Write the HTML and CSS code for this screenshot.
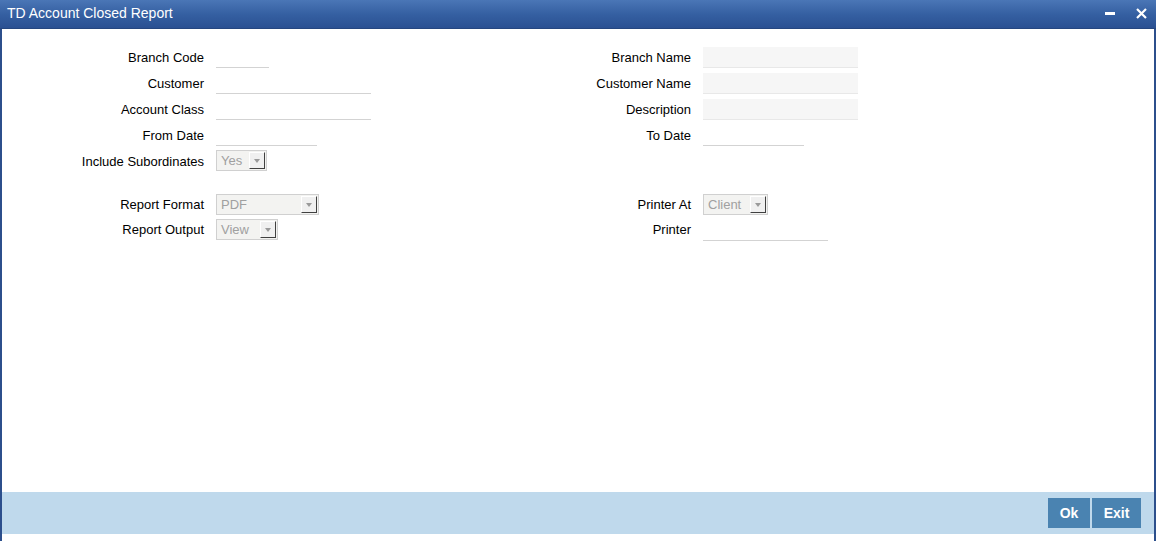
FILE: index.html
```html
<!DOCTYPE html>
<html lang="en">
<head>
    <meta charset="UTF-8">
    <title>TD Account Closed Report</title>
    <link rel="stylesheet" href="styles.css">
</head>
<body>
    <div class="window">
        <div class="titlebar">
            <span class="title">TD Account Closed Report</span>
            <div class="controls">
                <span class="minimize"></span>
                <svg class="close" width="11" height="11" viewBox="0 0 11 11">
                    <path d="M1 1 L10 10 M10 1 L1 10" stroke="#fff" stroke-width="2.2" fill="none"/>
                </svg>
            </div>
        </div>

        <div class="content">
            <div class="grid main">
                <label class="lbl">Branch Code</label>
                <div class="fld"><span class="input w53"></span></div>
                <label class="lbl">Branch Name</label>
                <div class="fld"><span class="input ro w155"></span></div>

                <label class="lbl">Customer</label>
                <div class="fld"><span class="input w155"></span></div>
                <label class="lbl">Customer Name</label>
                <div class="fld"><span class="input ro w155"></span></div>

                <label class="lbl">Account Class</label>
                <div class="fld"><span class="input w155"></span></div>
                <label class="lbl">Description</label>
                <div class="fld"><span class="input ro w155"></span></div>

                <label class="lbl">From Date</label>
                <div class="fld"><span class="input w101"></span></div>
                <label class="lbl">To Date</label>
                <div class="fld"><span class="input w101"></span></div>

                <label class="lbl">Include Subordinates</label>
                <div class="fld"><span class="select w51"><span class="val">Yes</span><span class="arrow"></span></span></div>
                <span></span>
                <span></span>
            </div>

            <div class="grid report">
                <label class="lbl">Report Format</label>
                <div class="fld"><span class="select w103"><span class="val">PDF</span><span class="arrow"></span></span></div>
                <label class="lbl">Printer At</label>
                <div class="fld"><span class="select w65"><span class="val">Client</span><span class="arrow"></span></span></div>

                <label class="lbl">Report Output</label>
                <div class="fld"><span class="select w62"><span class="val">View</span><span class="arrow"></span></span></div>
                <label class="lbl">Printer</label>
                <div class="fld"><span class="input w125"></span></div>
            </div>
        </div>

        <div class="footer">
            <button class="btn">Ok</button>
            <button class="btn">Exit</button>
        </div>
        <div class="bottom"></div>
    </div>
</body>
</html>
```

FILE: styles.css
```css
* { margin: 0; padding: 0; box-sizing: border-box; }
body {
    font-family: 'Liberation Sans', Arial, sans-serif;
    background: #fff;
    width: 1156px;
    height: 541px;
    overflow: hidden;
}
.window {
    height: 541px;
    border-left: 2px solid #2c4f8c;
    border-right: 2px solid #2c4f8c;
    display: flex;
    flex-direction: column;
}
.titlebar {
    height: 29px;
    margin: 0 -2px;
    padding: 0 9px 0 7px;
    background: linear-gradient(to bottom, #4a76b6 0%, #3560a2 50%, #2a5092 100%);
    color: #fff;
    display: flex;
    align-items: center;
    justify-content: space-between;
    border-bottom: 1px solid #25467f;
}
.title { font-size: 14px; margin-top: -2px; }
.controls { display: flex; align-items: center; gap: 21px; margin-top: -2px; }
.minimize { display: block; width: 10px; height: 3px; background: #fff; }
.close { display: block; }

.content { flex: 1; padding-top: 15px; }
.grid {
    display: grid;
    grid-template-columns: 214px 284px 203px 1fr;
    font-size: 13px;
    color: #000;
}
.main { grid-auto-rows: 26px; }
.report { grid-auto-rows: 25px; margin-top: 18px; }
.lbl {
    text-align: right;
    padding-right: 12px;
    display: flex;
    align-items: center;
    justify-content: flex-end;
    white-space: nowrap;
}
.fld { display: flex; align-items: center; }

.input {
    display: block;
    height: 21px;
    border-bottom: 1px solid #d3d3d3;
    margin-top: 1px;
}
.input.ro { background: #f6f6f6; border-bottom-color: #e8e8e8; }
.w53 { width: 53px; }
.w101 { width: 101px; }
.w125 { width: 125px; }
.w155 { width: 155px; }
.w51 { width: 51px; }
.w62 { width: 62px; }
.w65 { width: 65px; }
.w103 { width: 103px; }

.select {
    height: 21px;
    margin-top: -1px;
    border: 1px solid #d0d0d0;
    background: #f3f3f1;
    display: flex;
    align-items: center;
    justify-content: space-between;
    padding: 0 1px 0 4px;
    color: #a0a0a0;
    font-size: 13px;
}
.arrow {
    width: 16px;
    height: 17px;
    background: #f0f0f0;
    border-top: 1px solid #fff;
    border-left: 1px solid #fff;
    border-right: 1px solid #404040;
    border-bottom: 1px solid #404040;
    position: relative;
}
.arrow::after {
    content: "";
    position: absolute;
    left: 4px;
    top: 6px;
    border-left: 3px solid transparent;
    border-right: 3px solid transparent;
    border-top: 4px solid #9a9a9a;
}

.footer {
    height: 42px;
    background: #bfd9ec;
    display: flex;
    justify-content: flex-end;
    align-items: center;
    gap: 2px;
    padding-right: 13px;
}
.btn {
    background: #4a83b1;
    color: #fff;
    border: none;
    height: 30px;
    font-family: 'Liberation Sans', Arial, sans-serif;
    font-size: 14px;
    font-weight: bold;
}
.btn:first-child { width: 42px; }
.btn:last-child { width: 49px; }
.bottom { height: 7px; background: #fff; }
```
